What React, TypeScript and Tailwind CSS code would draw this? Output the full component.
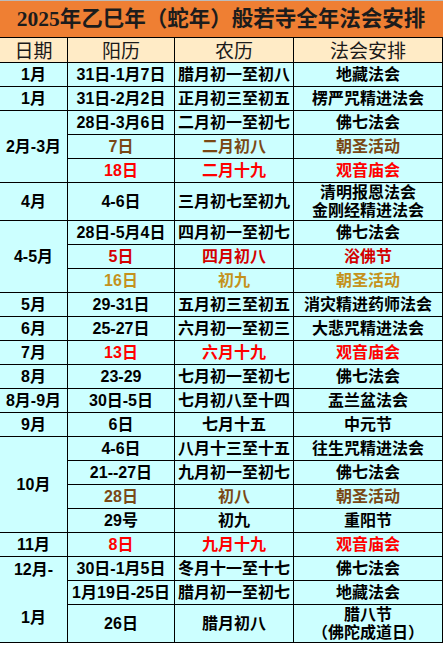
const font = { fontFamily: '"Liberation Sans", "Noto Sans CJK SC", sans-serif' };

type Row = {
  cells: string[];
  color?: string;
  tall?: boolean;
  group?: { label: React.ReactNode; span: number };
  skipGroup?: boolean;
};

const BROWN = "text-[#7a4814]";
const GOLD = "text-[#c4921c]";
const DARKRED = "text-[#d40000]";
const RED = "text-[#ff0000]";

const rows: Row[] = [
  { group: { label: "1月", span: 1 }, cells: ["31日-1月7日", "腊月初一至初八", "地藏法会"] },
  { group: { label: "1月", span: 1 }, cells: ["31日-2月2日", "正月初三至初五", "楞严咒精进法会"] },
  { group: { label: "2月-3月", span: 3 }, cells: ["28日-3月6日", "二月初一至初七", "佛七法会"] },
  { skipGroup: true, color: BROWN, cells: ["7日", "二月初八", "朝圣活动"] },
  { skipGroup: true, color: RED, cells: ["18日", "二月十九", "观音庙会"] },
  { group: { label: "4月", span: 1 }, tall: true, cells: ["4-6日", "三月初七至初九", "清明报恩法会\n金刚经精进法会"] },
  { group: { label: "4-5月", span: 3 }, cells: ["28日-5月4日", "四月初一至初七", "佛七法会"] },
  { skipGroup: true, color: DARKRED, cells: ["5日", "四月初八", "浴佛节"] },
  { skipGroup: true, color: GOLD, cells: ["16日", "初九", "朝圣活动"] },
  { group: { label: "5月", span: 1 }, cells: ["29-31日", "五月初三至初五", "消灾精进药师法会"] },
  { group: { label: "6月", span: 1 }, cells: ["25-27日", "六月初一至初三", "大悲咒精进法会"] },
  { group: { label: "7月", span: 1 }, color: RED, cells: ["13日", "六月十九", "观音庙会"] },
  { group: { label: "8月", span: 1 }, cells: ["23-29", "七月初一至初七", "佛七法会"] },
  { group: { label: "8月-9月", span: 1 }, cells: ["30日-5日", "七月初八至十四", "盂兰盆法会"] },
  { group: { label: "9月", span: 1 }, cells: ["6日", "七月十五", "中元节"] },
  { group: { label: "10月", span: 4 }, cells: ["4-6日", "八月十三至十五", "往生咒精进法会"] },
  { skipGroup: true, cells: ["21--27日", "九月初一至初七", "佛七法会"] },
  { skipGroup: true, color: BROWN, cells: ["28日", "初八", "朝圣活动"] },
  { skipGroup: true, cells: ["29号", "初九", "重阳节"] },
  { group: { label: "11月", span: 1 }, color: RED, cells: ["8日", "九月十九", "观音庙会"] },
  {
    group: {
      label: (
        <div className="flex h-[84px] flex-col items-center justify-between pt-[2px] pb-[12px] leading-[22px]">
          <span>12月-</span>
          <span>1月</span>
        </div>
      ),
      span: 3,
    },
    cells: ["30日-1月5日", "冬月十一至十七", "佛七法会"],
  },
  { skipGroup: true, cells: ["1月19日-25日", "腊月初一至初七", "地藏法会"] },
  { skipGroup: true, tall: true, cells: ["26日", "腊月初八", "腊八节\n（佛陀成道日）"] },
];

export default function App() {
  return (
    <div className="h-[645px] w-[445px] overflow-hidden bg-white">
      <table
        className="ml-[-1px] w-[443px] table-fixed border-collapse text-center text-[16px] font-bold text-black"
        style={font}
      >
        <colgroup>
          <col className="w-[68px]" />
          <col className="w-[107px]" />
          <col className="w-[119px]" />
          <col className="w-[149px]" />
        </colgroup>
        <thead>
          <tr className="h-[37px] bg-[#ef7f33]">
            <th
              colSpan={4}
              className="border-b border-b-black border-t border-t-[#bbbbbb] p-0 text-[21.5px] font-bold text-[#1c1c1c]"
              style={{ fontFamily: '"Liberation Serif", "Noto Sans CJK SC", serif' }}
            >
              2025年乙巳年（蛇年）般若寺全年法会安排
            </th>
          </tr>
          <tr className="h-[25px] bg-[#ffebc6] text-[19px] font-normal text-[#1a1a1a]">
            {["日期", "阳历", "农历", "法会安排"].map((h) => (
              <th key={h} className="border border-black p-0 font-normal leading-[22px]" style={{ fontFamily: '"Noto Sans CJK SC", serif' }}>
                {h}
              </th>
            ))}
          </tr>
        </thead>
        <tbody className="bg-[#ccffff]">
          {rows.map((r, i) => (
            <tr key={i} className={r.tall ? "h-[38px]" : "h-[24px]"}>
              {!r.skipGroup && r.group && (
                <td
                  rowSpan={r.group.span}
                  className={`border border-black p-0 leading-[20px] ${r.group.span === 3 && typeof r.group.label !== "string" ? "align-top" : ""}`}
                >
                  {r.group.label}
                </td>
              )}
              {r.cells.map((c, j) => (
                <td
                  key={j}
                  className={`whitespace-pre-line border border-black p-0 leading-[18px] ${r.color ?? ""}`}
                >
                  {c}
                </td>
              ))}
            </tr>
          ))}
        </tbody>
      </table>
    </div>
  );
}
